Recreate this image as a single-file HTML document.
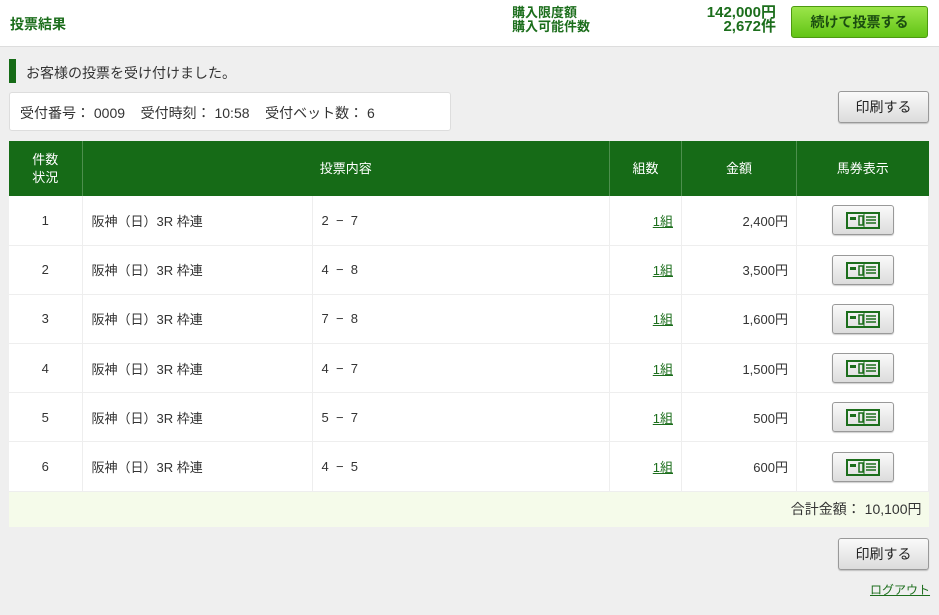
<!DOCTYPE html>
<html><head><meta charset="utf-8"><style>
*{box-sizing:border-box;margin:0;padding:0}
body{width:939px;height:615px;background:#efefef;font-family:"Liberation Sans","Noto Sans CJK JP",sans-serif;font-size:13px;color:#333;position:relative;overflow:hidden}
.hdr{position:absolute;left:0;top:0;width:939px;height:47px;background:#fff;border-bottom:1px solid #ddd}
.abs{position:absolute}
.g{color:#1c6e1c;font-weight:bold}
.btn{position:absolute;background:linear-gradient(#fafafa,#dcdcdc);border:1px solid #999;border-radius:3px;text-align:center;color:#222;font-size:14px;box-shadow:0 1px 1px rgba(0,0,0,.2)}
table{position:absolute;left:9px;top:141px;width:920px;border-collapse:collapse;background:#fff}
th{background:#166b17;color:#fff;font-weight:normal;font-size:13px;border-right:1px solid #4d8f4d;height:55px;line-height:18px}
td{height:49.2px;border-bottom:1px solid #eee;border-right:1px solid #eee;font-size:13px;white-space:pre}
a{color:#1c6e1c;text-decoration:underline}
.ic{display:inline-block;width:62px;height:30px;background:linear-gradient(#fafafa,#dcdcdc);border:1px solid #999;border-radius:3px;vertical-align:middle;box-shadow:0 1px 1px rgba(0,0,0,.2);padding-top:6px}
</style></head><body>
<div class="hdr">
<div class="abs g" style="left:10px;top:14px;font-size:14px">投票結果</div>
<div class="abs g" style="left:512px;top:6px;font-size:13px;line-height:14px">購入限度額<br>購入可能件数</div>
<div class="abs g" style="left:660px;top:6px;width:116px;text-align:right;font-size:15px;line-height:14px">142,000円<br>2,672件</div>
<div class="abs" style="left:791px;top:6px;width:137px;height:32px;border-radius:3px;border:1px solid #4d9a10;background:linear-gradient(#9be54a,#62c415);color:#1b4d10;font-weight:bold;font-size:14px;text-align:center;line-height:30px">続けて投票する</div>
</div>
<div class="abs" style="left:9px;top:59px;width:7px;height:24px;background:#166b17"></div>
<div class="abs" style="left:26px;top:63px;font-size:14px">お客様の投票を受け付けました。</div>
<div class="abs" style="left:9px;top:92px;width:442px;height:39px;background:#fff;border:1px solid #ddd;border-radius:3px;padding:10px 0 0 10px;font-size:14px;white-space:pre">受付番号： 0009    受付時刻： 10:58    受付ベット数： 6</div>
<div class="btn" style="left:838px;top:91px;width:91px;height:32px;line-height:30px">印刷する</div>
<table>
<tr><th style="width:73px">件数<br>状況</th><th colspan="2">投票内容</th><th style="width:72px">組数</th><th style="width:115px">金額</th><th style="width:132px;border-right:none">馬券表示</th></tr>
<tr><td style="text-align:center">1</td><td style="width:230px;padding-left:9px">阪神（日）3R 枠連</td><td style="padding-left:9px">2  −  7</td><td style="text-align:right;padding-right:8px"><a>1組</a></td><td style="text-align:right;padding-right:8px">2,400円</td><td style="text-align:center"><span class="ic"><svg width="34" height="17" viewBox="0 0 34 17"><rect x="1" y="1" width="32" height="15" fill="none" stroke="#1c6e1c" stroke-width="2"/><rect x="4" y="5" width="6" height="3" fill="#1c6e1c"/><rect x="13" y="4" width="4" height="9" fill="none" stroke="#1c6e1c" stroke-width="1.5"/><path d="M20 5h10M20 8h10M20 11h10" stroke="#1c6e1c" stroke-width="1.5"/><path d="M18 1v15" stroke="#1c6e1c" stroke-width="1"/></svg></span></td></tr>
<tr><td style="text-align:center">2</td><td style="padding-left:9px">阪神（日）3R 枠連</td><td style="padding-left:9px">4  −  8</td><td style="text-align:right;padding-right:8px"><a>1組</a></td><td style="text-align:right;padding-right:8px">3,500円</td><td style="text-align:center"><span class="ic"><svg width="34" height="17" viewBox="0 0 34 17"><rect x="1" y="1" width="32" height="15" fill="none" stroke="#1c6e1c" stroke-width="2"/><rect x="4" y="5" width="6" height="3" fill="#1c6e1c"/><rect x="13" y="4" width="4" height="9" fill="none" stroke="#1c6e1c" stroke-width="1.5"/><path d="M20 5h10M20 8h10M20 11h10" stroke="#1c6e1c" stroke-width="1.5"/><path d="M18 1v15" stroke="#1c6e1c" stroke-width="1"/></svg></span></td></tr>
<tr><td style="text-align:center">3</td><td style="padding-left:9px">阪神（日）3R 枠連</td><td style="padding-left:9px">7  −  8</td><td style="text-align:right;padding-right:8px"><a>1組</a></td><td style="text-align:right;padding-right:8px">1,600円</td><td style="text-align:center"><span class="ic"><svg width="34" height="17" viewBox="0 0 34 17"><rect x="1" y="1" width="32" height="15" fill="none" stroke="#1c6e1c" stroke-width="2"/><rect x="4" y="5" width="6" height="3" fill="#1c6e1c"/><rect x="13" y="4" width="4" height="9" fill="none" stroke="#1c6e1c" stroke-width="1.5"/><path d="M20 5h10M20 8h10M20 11h10" stroke="#1c6e1c" stroke-width="1.5"/><path d="M18 1v15" stroke="#1c6e1c" stroke-width="1"/></svg></span></td></tr>
<tr><td style="text-align:center">4</td><td style="padding-left:9px">阪神（日）3R 枠連</td><td style="padding-left:9px">4  −  7</td><td style="text-align:right;padding-right:8px"><a>1組</a></td><td style="text-align:right;padding-right:8px">1,500円</td><td style="text-align:center"><span class="ic"><svg width="34" height="17" viewBox="0 0 34 17"><rect x="1" y="1" width="32" height="15" fill="none" stroke="#1c6e1c" stroke-width="2"/><rect x="4" y="5" width="6" height="3" fill="#1c6e1c"/><rect x="13" y="4" width="4" height="9" fill="none" stroke="#1c6e1c" stroke-width="1.5"/><path d="M20 5h10M20 8h10M20 11h10" stroke="#1c6e1c" stroke-width="1.5"/><path d="M18 1v15" stroke="#1c6e1c" stroke-width="1"/></svg></span></td></tr>
<tr><td style="text-align:center">5</td><td style="padding-left:9px">阪神（日）3R 枠連</td><td style="padding-left:9px">5  −  7</td><td style="text-align:right;padding-right:8px"><a>1組</a></td><td style="text-align:right;padding-right:8px">500円</td><td style="text-align:center"><span class="ic"><svg width="34" height="17" viewBox="0 0 34 17"><rect x="1" y="1" width="32" height="15" fill="none" stroke="#1c6e1c" stroke-width="2"/><rect x="4" y="5" width="6" height="3" fill="#1c6e1c"/><rect x="13" y="4" width="4" height="9" fill="none" stroke="#1c6e1c" stroke-width="1.5"/><path d="M20 5h10M20 8h10M20 11h10" stroke="#1c6e1c" stroke-width="1.5"/><path d="M18 1v15" stroke="#1c6e1c" stroke-width="1"/></svg></span></td></tr>
<tr><td style="text-align:center">6</td><td style="padding-left:9px">阪神（日）3R 枠連</td><td style="padding-left:9px">4  −  5</td><td style="text-align:right;padding-right:8px"><a>1組</a></td><td style="text-align:right;padding-right:8px">600円</td><td style="text-align:center"><span class="ic"><svg width="34" height="17" viewBox="0 0 34 17"><rect x="1" y="1" width="32" height="15" fill="none" stroke="#1c6e1c" stroke-width="2"/><rect x="4" y="5" width="6" height="3" fill="#1c6e1c"/><rect x="13" y="4" width="4" height="9" fill="none" stroke="#1c6e1c" stroke-width="1.5"/><path d="M20 5h10M20 8h10M20 11h10" stroke="#1c6e1c" stroke-width="1.5"/><path d="M18 1v15" stroke="#1c6e1c" stroke-width="1"/></svg></span></td></tr>
<tr><td colspan="6" style="height:36px;background:#f5fbea;text-align:right;padding-right:7px;font-size:14px;border:none">合計金額： 10,100円</td></tr>
</table>
<div class="btn" style="left:838px;top:538px;width:91px;height:32px;line-height:30px">印刷する</div>
<div class="abs" style="left:870px;top:581px;font-size:12px"><a>ログアウト</a></div>
</body></html>
